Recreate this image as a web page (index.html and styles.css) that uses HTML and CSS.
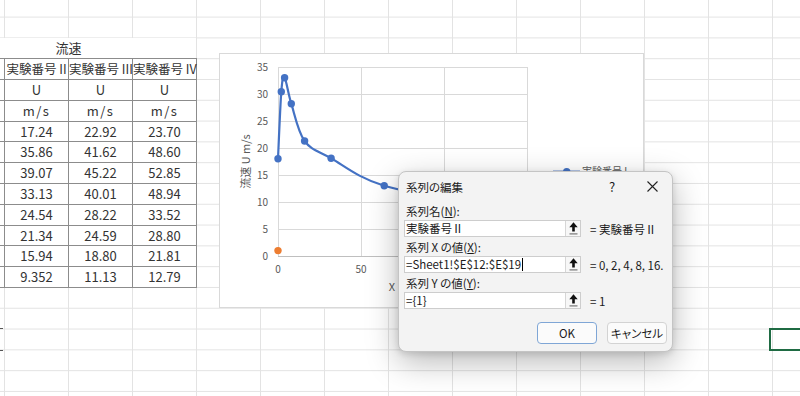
FILE: index.html
```html
<!DOCTYPE html>
<html>
<head>
    <meta charset="utf-8">
    <title>系列の編集</title>
    <link rel="stylesheet" href="styles.css">
</head>
<body>
    <div class="sheet">
        <div class="table-block">
            <div class="merged-cell">流速</div>
            <div class="data-grid">
                <!-- first column lies left of the visible area -->
                <div class="cell"></div>
                <div class="cell head">実験番号 II</div>
                <div class="cell head">実験番号 III</div>
                <div class="cell head">実験番号 IV</div>

                <div class="cell"></div>
                <div class="cell">U</div>
                <div class="cell">U</div>
                <div class="cell">U</div>

                <div class="cell"></div>
                <div class="cell unit">m/s</div>
                <div class="cell unit">m/s</div>
                <div class="cell unit">m/s</div>

                <div class="cell"></div>
                <div class="cell">17.24</div>
                <div class="cell">22.92</div>
                <div class="cell">23.70</div>

                <div class="cell"></div>
                <div class="cell">35.86</div>
                <div class="cell">41.62</div>
                <div class="cell">48.60</div>

                <div class="cell"></div>
                <div class="cell">39.07</div>
                <div class="cell">45.22</div>
                <div class="cell">52.85</div>

                <div class="cell"></div>
                <div class="cell">33.13</div>
                <div class="cell">40.01</div>
                <div class="cell">48.94</div>

                <div class="cell"></div>
                <div class="cell">24.54</div>
                <div class="cell">28.22</div>
                <div class="cell">33.52</div>

                <div class="cell"></div>
                <div class="cell">21.34</div>
                <div class="cell">24.59</div>
                <div class="cell">28.80</div>

                <div class="cell"></div>
                <div class="cell">15.94</div>
                <div class="cell">18.80</div>
                <div class="cell">21.81</div>

                <div class="cell"></div>
                <div class="cell">9.352</div>
                <div class="cell">11.13</div>
                <div class="cell">12.79</div>
            </div>
        </div>

        <!-- chart object floating over the cells -->
        <div class="chart">
            <svg width="425" height="255" viewBox="0 0 425 255">
                <rect x="0.5" y="0.5" width="424" height="254" fill="#fff" stroke="#d9d9d9"/>

                <g stroke="#d9d9d9" stroke-width="1">
                    <line x1="59" y1="14.5" x2="308" y2="14.5"/>
                    <line x1="59" y1="41.5" x2="308" y2="41.5"/>
                    <line x1="59" y1="68.5" x2="308" y2="68.5"/>
                    <line x1="59" y1="95.5" x2="308" y2="95.5"/>
                    <line x1="59" y1="122.5" x2="308" y2="122.5"/>
                    <line x1="59" y1="149.5" x2="308" y2="149.5"/>
                    <line x1="59" y1="176.5" x2="308" y2="176.5"/>
                    <line x1="142.5" y1="14" x2="142.5" y2="203"/>
                    <line x1="225.5" y1="14" x2="225.5" y2="203"/>
                    <line x1="308.5" y1="14" x2="308.5" y2="203"/>
                    <line x1="59.5" y1="14" x2="59.5" y2="203"/>
                </g>
                <line x1="59" y1="203.5" x2="309" y2="203.5" stroke="#bfbfbf"/>

                <g class="tick" text-anchor="end">
                    <text x="49" y="17.5">35</text>
                    <text x="49" y="44.5">30</text>
                    <text x="49" y="71.5">25</text>
                    <text x="49" y="98.5">20</text>
                    <text x="49" y="125.5">15</text>
                    <text x="49" y="152.5">10</text>
                    <text x="49" y="179.5">5</text>
                    <text x="49" y="206.5">0</text>
                </g>
                <g class="tick" text-anchor="middle">
                    <text x="59" y="220">0</text>
                    <text x="142" y="220">50</text>
                </g>

                <text class="axis-title" x="173" y="238" text-anchor="middle">X</text>
                <text class="axis-title" text-anchor="middle" transform="translate(31,108.5) rotate(-90)">流速 U m/s</text>

                <path d="M59,105.8 C59.55,94.6 61.2,52.3 62.3,38.8 C63.4,25.3 63.93,22.8 65.6,24.8 C67.27,26.8 68.97,40.2 72.3,50.7 C75.63,61.2 78.97,78.9 85.6,88 C92.23,97.1 98.83,97.8 112.1,105.3 C125.37,112.8 138.63,124.6 165.2,132.8 C191.77,141 253.8,150.8 271.5,154.4"
                      fill="none" stroke="#4472c4" stroke-width="2.2" stroke-linecap="round"/>
                <g fill="#4472c4">
                    <circle cx="59" cy="105.8" r="3.7"/>
                    <circle cx="62.3" cy="38.8" r="3.7"/>
                    <circle cx="65.6" cy="24.8" r="3.7"/>
                    <circle cx="72.3" cy="50.7" r="3.7"/>
                    <circle cx="85.6" cy="88" r="3.7"/>
                    <circle cx="112.1" cy="105.3" r="3.7"/>
                    <circle cx="165.2" cy="132.8" r="3.7"/>
                    <circle cx="271.5" cy="154.4" r="3.7"/>
                </g>
                <circle cx="59" cy="197.6" r="3.7" fill="#ed7d31"/>

                <line x1="334" y1="118.7" x2="361" y2="118.7" stroke="#4472c4" stroke-width="2.2"/>
                <circle cx="347.7" cy="118.7" r="3.7" fill="#4472c4"/>
                <text class="tick" x="363" y="122">実験番号 I</text>
            </svg>
        </div>

        <div class="dialog">
            <div class="dialog-title">
                <span class="title-text">系列の編集</span>
                <span class="title-btn">?</span>
                <span class="title-btn">
                    <svg width="11" height="11" viewBox="0 0 11 11">
                        <path d="M0.5 0.5 L10.5 10.5 M10.5 0.5 L0.5 10.5" stroke="#222" stroke-width="1.1"/>
                    </svg>
                </span>
            </div>

            <div class="dialog-body">
                <div class="field">
                    <div class="field-label">系列名(<u>N</u>):</div>
                    <div class="field-row">
                        <div class="ref-box">
                            <span class="ref-text">実験番号Ⅱ</span>
                            <span class="ref-btn">
                                <svg width="9" height="13" viewBox="0 0 9 13">
                                    <path d="M4.5 0.3 L8.7 5.2 H5.8 V9.6 H3.2 V5.2 H0.3 Z" fill="#111"/>
                                    <rect x="0.5" y="11.3" width="8" height="1.2" fill="#777"/>
                                </svg>
                            </span>
                        </div>
                        <span class="ref-value">= 実験番号Ⅱ</span>
                    </div>
                </div>

                <div class="field">
                    <div class="field-label">系列 X の値(<u>X</u>):</div>
                    <div class="field-row">
                        <div class="ref-box">
                            <span class="ref-text">=Sheet1!$E$12:$E$19<span class="caret"></span></span>
                            <span class="ref-btn">
                                <svg width="9" height="13" viewBox="0 0 9 13">
                                    <path d="M4.5 0.3 L8.7 5.2 H5.8 V9.6 H3.2 V5.2 H0.3 Z" fill="#111"/>
                                    <rect x="0.5" y="11.3" width="8" height="1.2" fill="#777"/>
                                </svg>
                            </span>
                        </div>
                        <span class="ref-value">= 0, 2, 4, 8, 16.</span>
                    </div>
                </div>

                <div class="field">
                    <div class="field-label">系列 Y の値(<u>Y</u>):</div>
                    <div class="field-row">
                        <div class="ref-box">
                            <span class="ref-text">={1}</span>
                            <span class="ref-btn">
                                <svg width="9" height="13" viewBox="0 0 9 13">
                                    <path d="M4.5 0.3 L8.7 5.2 H5.8 V9.6 H3.2 V5.2 H0.3 Z" fill="#111"/>
                                    <rect x="0.5" y="11.3" width="8" height="1.2" fill="#777"/>
                                </svg>
                            </span>
                        </div>
                        <span class="ref-value">= 1</span>
                    </div>
                </div>

                <div class="dialog-buttons">
                    <button class="btn ok-btn">OK</button>
                    <button class="btn">キャンセル</button>
                </div>
            </div>
        </div>

        <div class="active-cell"></div>
        <div class="row-mark"></div>
    </div>
</body>
</html>
```

FILE: styles.css
```css
body {
    margin: 0;
    font-family: "Noto Sans CJK JP", "Noto Sans", sans-serif;
    color: #262626;
    background-color: white;
}

.sheet {
    position: relative;
    width: 800px;
    height: 396px;
    overflow: hidden;
    background-color: white;
    background-image:
        linear-gradient(to right, #e3e3e3 1px, transparent 1px),
        linear-gradient(to bottom, #e3e3e3 1px, transparent 1px);
    background-size: 64px 100%, 100% 20.8px;
    background-position: 4px 0, 0 16.6px;
}

/* table */

.table-block {
    width: 256px;
    margin-left: -59px;
    padding-top: 38.4px;
}

.merged-cell {
    width: 255px;
    height: 19.8px;
    line-height: 19.8px;
    background-color: white;
    text-align: center;
    font-size: 13px;
    color: #333;
}

.data-grid {
    display: grid;
    grid-template-columns: repeat(4, 64px);
    grid-auto-rows: 20.8px;
    border-top: 1px solid #8c8c8c;
}

.cell {
    box-sizing: border-box;
    border-right: 1px solid #8c8c8c;
    border-bottom: 1px solid #8c8c8c;
    background-color: white;
    text-align: center;
    font-size: 13px;
    line-height: 19.8px;
    white-space: nowrap;
    color: #333;
}

.cell.head {
    font-size: 12.5px;
}

.cell.unit {
    letter-spacing: 1.5px;
}

/* chart */

.chart {
    position: absolute;
    left: 219px;
    top: 53px;
    width: 425px;
    height: 255px;
}

.chart svg {
    display: block;
}

.tick {
    font-family: "Noto Sans CJK JP", sans-serif;
    font-size: 10px;
    fill: #595959;
}

.axis-title {
    font-family: "Noto Sans CJK JP", sans-serif;
    font-size: 11px;
    fill: #595959;
}

/* dialog */

.dialog {
    position: absolute;
    left: 398px;
    top: 171px;
    width: 275px;
    box-sizing: border-box;
    padding-bottom: 7px;
    border: 1px solid #c4c4c4;
    border-radius: 8px;
    background-color: #f3f3f3;
    box-shadow: 0 10px 32px rgba(0, 0, 0, 0.28), 0 2px 6px rgba(0, 0, 0, 0.12);
    font-size: 11.5px;
    color: #1b1b1b;
    font-feature-settings: "palt";
}

.dialog-title {
    display: flex;
    align-items: center;
    height: 29px;
    padding-left: 7px;
}

.title-text {
    flex: 1;
}

.title-btn {
    width: 40px;
    display: flex;
    justify-content: center;
    font-size: 13px;
}

.dialog-body {
    padding: 0 5px;
}

.field-label {
    margin-top: 3px;
    padding-left: 2px;
    height: 15px;
    line-height: 15px;
}

.field-row {
    display: flex;
    align-items: center;
    margin-top: 1px;
    white-space: nowrap;
    overflow: hidden;
}

.ref-box {
    display: flex;
    flex-shrink: 0;
    width: 177px;
    height: 17px;
    box-sizing: border-box;
    border: 1px solid #cdcdcd;
    background-color: white;
}

.ref-text {
    flex: 1;
    padding-left: 1px;
    line-height: 15px;
    display: flex;
    align-items: center;
}

.caret {
    display: inline-block;
    width: 0;
    height: 13px;
    border-left: 1px solid #000;
    margin-left: 1px;
}

.ref-btn {
    width: 15px;
    box-sizing: border-box;
    border-left: 1px solid #d6d6d6;
    background-color: #f7f7f7;
    display: flex;
    justify-content: center;
    align-items: center;
}

.ref-value {
    flex-shrink: 0;
    margin-left: 9px;
}

.dialog-buttons {
    display: flex;
    justify-content: flex-end;
    gap: 10px;
    margin-top: 13px;
}

.btn {
    width: 60px;
    height: 22px;
    padding: 0;
    border: 1px solid #d3d3d3;
    border-radius: 4px;
    background-color: #fbfbfb;
    font-family: "Noto Sans CJK JP", sans-serif;
    font-size: 11.5px;
    font-feature-settings: "palt";
    color: #1b1b1b;
}

.ok-btn {
    border-color: #7fa6d6;
}

/* selection markers */

.active-cell {
    position: absolute;
    left: 769px;
    top: 327.5px;
    width: 40px;
    height: 23px;
    box-sizing: border-box;
    border: 2px solid #1f6b43;
}

.row-mark {
    position: absolute;
    left: 0;
    top: 327.5px;
    width: 3px;
    height: 23px;
    box-sizing: border-box;
    border-top: 1px solid #555;
    border-bottom: 1px solid #555;
}
```
